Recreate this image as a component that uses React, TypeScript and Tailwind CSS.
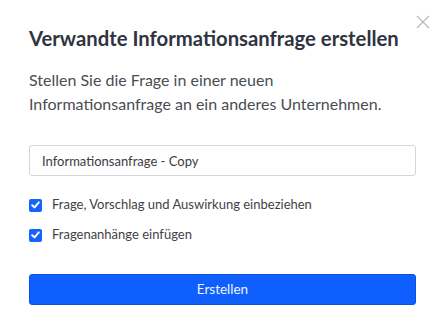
import { useState } from "react";

function CheckBox({ checked }: { checked: boolean }) {
  return (
    <span
      className={
        checked
          ? "flex h-[13px] w-[13px] shrink-0 items-center justify-center rounded-[2px] bg-[#1463ff]"
          : "flex h-[13px] w-[13px] shrink-0 items-center justify-center rounded-[2px] border border-[#9aa0a8] bg-white"
      }
    >
      {checked && (
        <svg width="9" height="8" viewBox="0 0 9 8" fill="none">
          <path
            d="M1.2 4.2 L3.5 6.4 L7.8 1.4"
            stroke="white"
            strokeWidth="2"
            strokeLinecap="round"
            strokeLinejoin="round"
          />
        </svg>
      )}
    </span>
  );
}

export default function App() {
  const [name, setName] = useState("Informationsanfrage - Copy");
  const [includeQuestion, setIncludeQuestion] = useState(true);
  const [includeAttachments, setIncludeAttachments] = useState(true);

  return (
    <div className="relative h-[334px] w-[445px] bg-white px-[29px] pt-6 font-['Lato','Open_Sans',sans-serif]">
      {/* close */}
      <button className="absolute right-[15px] top-[15px] h-[14px] w-[14px] text-[#b5b5b5]">
        <svg width="14" height="14" viewBox="0 0 14 14" fill="none">
          <path d="M1 1 L13 13 M13 1 L1 13" stroke="currentColor" strokeWidth="1.1" />
        </svg>
      </button>

      <h2 className="text-[20.3px] font-bold leading-7 text-[#2e3440]">
        Verwandte Informationsanfrage erstellen
      </h2>

      <p className="mt-4 text-[16px] leading-6 text-[#4a4d52]">
        Stellen Sie die Frage in einer neuen Informationsanfrage an ein anderes Unternehmen.
      </p>

      <input
        value={name}
        onChange={(e) => setName(e.target.value)}
        className="mt-[29px] block h-[31px] w-full rounded-[3px] border border-[#d3d5d8] px-[12px] text-[13px] text-[#3a3d42] outline-none"
      />

      <div className="mt-[19px] flex flex-col gap-[10px]">
        <label
          className="flex h-5 cursor-pointer items-center gap-[10px] text-[13px] text-[#3f4247]"
          onClick={() => setIncludeQuestion(!includeQuestion)}
        >
          <CheckBox checked={includeQuestion} />
          Frage, Vorschlag und Auswirkung einbeziehen
        </label>
        <label
          className="flex h-5 cursor-pointer items-center gap-[10px] text-[13px] text-[#3f4247]"
          onClick={() => setIncludeAttachments(!includeAttachments)}
        >
          <CheckBox checked={includeAttachments} />
          Fragenanhänge einfügen
        </label>
      </div>

      <button className="mt-[29px] block h-[31px] w-full rounded-[3px] border border-[#0b52e0] bg-[#0f5fff] text-[13.5px] text-[#eef3ff]">
        Erstellen
      </button>
    </div>
  );
}
